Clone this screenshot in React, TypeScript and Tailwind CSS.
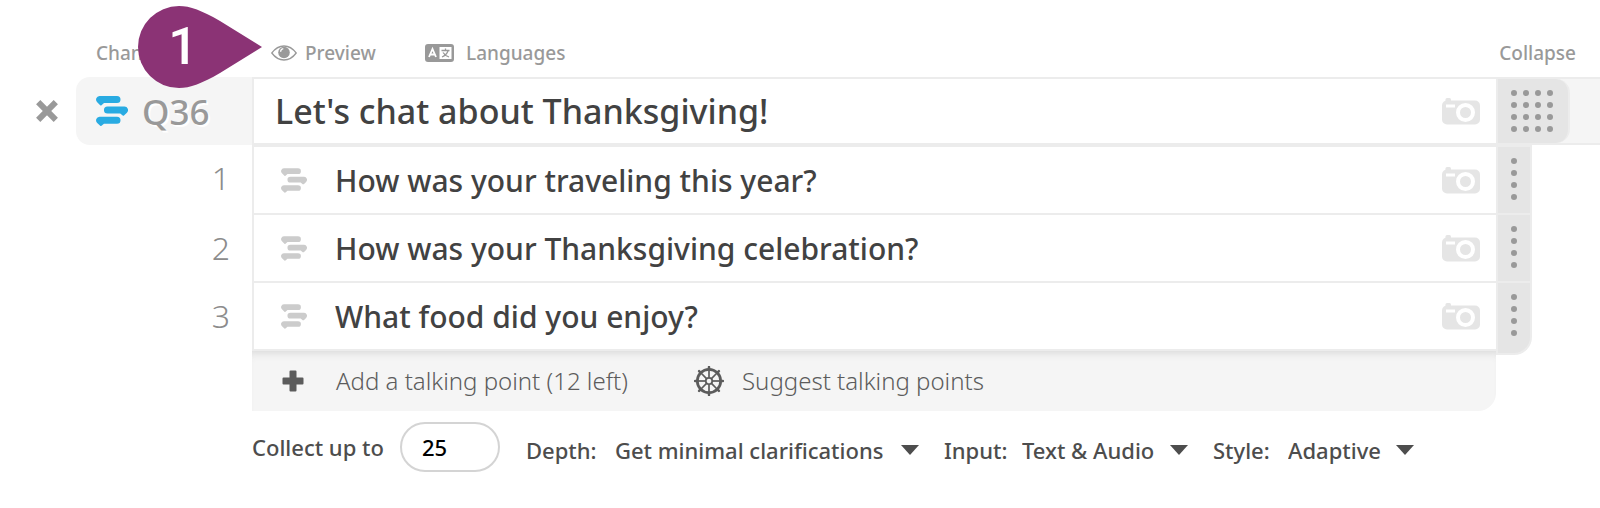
import React from 'react';

const talkingPoints = [
    'How was your traveling this year?',
    'How was your Thanksgiving celebration?',
    'What food did you enjoy?',
];

const settings = [
    { id: 'depth', label: 'Depth:', value: 'Get minimal clarifications', labelWidth: 'w-[75px]', width: 'w-[304px]' },
    { id: 'input', label: 'Input:', value: 'Text & Audio', labelWidth: 'w-16', width: 'w-[166px]' },
    { id: 'style', label: 'Style:', value: 'Adaptive', labelWidth: 'w-[61px]', width: 'w-[126px]' },
];

const spokes = [0, 45, 90, 135, 180, 225, 270, 315];

const ChatIcon: React.FC<{ className: string }> = ({ className }) => (
    <svg viewBox="0 0 32 30" className={className} fill="currentColor" aria-hidden="true">
        <path d="M3.500 0H21a3.500 3.500 0 0 1 0 7H8L5.500 9.300Q4.800 9.800 4.200 9.200L1.200 6.200A3.600 3.600 0 0 1 3.500 0Z" />
        <path d="M11.500 10.500H28.500a3.600 3.600 0 0 1 2.400 6.200L28 19.500Q27.400 20 26.700 19.500L24.200 17.600H11.500a3.500 3.500 0 0 1 0-7.100Z" />
        <path d="M3.500 20.700H21a3.500 3.500 0 0 1 0 7H8L5.500 29.800Q4.800 30.200 4.200 29.700L1.200 26.900A3.600 3.600 0 0 1 3.500 20.700Z" />
    </svg>
);

const CameraIcon = () => (
    <svg viewBox="0 0 38 28" className="h-7 w-[38px]" aria-hidden="true">
        <path fill="#e5e5e5" d="M3.500 2.500A1.500 1.500 0 0 1 5 1H7.500A1.500 1.500 0 0 1 9 2.500V5H3.500Z" />
        <rect y="3.500" width="38" height="24" rx="5" fill="#e5e5e5" />
        <rect x="4" y="7.500" width="9" height="3" fill="#fff" />
        <circle cx="23.500" cy="15.500" r="7.500" fill="none" stroke="#fff" strokeWidth="4" />
    </svg>
);

const EyeIcon = () => (
    <svg viewBox="0 0 26 16" className="h-4 w-[26px]" aria-hidden="true">
        <path d="M.8 8Q6 1 13 1T25.200 8Q20 15 13 15T.8 8Z" fill="none" stroke="currentColor" strokeWidth="1.300" />
        <circle cx="13" cy="7.500" r="5.800" fill="currentColor" />
        <path d="M9.600 6.800A3.300 3.300 0 0 1 12.300 3.600" fill="none" stroke="#fff" strokeWidth="1.300" />
    </svg>
);

const LanguageIcon = () => (
    <svg viewBox="0 0 29 18" className="h-[18px] w-[29px]" fill="none" aria-hidden="true">
        <rect width="29" height="18" rx="3" fill="currentColor" />
        <rect x="14.500" y="3" width="12" height="12" fill="#fff" />
        <path d="M4 13 7.500 5 11 13M5.300 10.500h4.400" stroke="#fff" strokeWidth="1.800" />
        <path d="M16.500 6.500h8M20.500 4.500v2M23 7q-1.500 4-6 6M18 8.500q2 3 6 4.500" stroke="currentColor" strokeWidth="1.300" />
    </svg>
);

const WheelIcon = () => (
    <svg viewBox="-15 -15 30 30" className="size-[30px]" fill="none" stroke="currentColor" aria-hidden="true">
        <circle r="11.700" strokeWidth="2.700" />
        <circle r="3.200" strokeWidth="1.800" />
        {spokes.map((angle) => (
            <g key={angle} transform={`rotate(${angle})`}>
                <path d="M0-3.500V-12" strokeWidth="1.700" />
                <path d="M0-12v-2" strokeWidth="2.500" strokeLinecap="round" />
            </g>
        ))}
    </svg>
);

const PlusIcon = () => (
    <svg viewBox="0 0 22 22" className="size-[22px]" fill="currentColor" aria-hidden="true">
        <path d="M8.500 .5h5a1 1 0 0 1 1 1v6h6a1 1 0 0 1 1 1v5a1 1 0 0 1-1 1h-6v6a1 1 0 0 1-1 1h-5a1 1 0 0 1-1-1v-6h-6a1 1 0 0 1-1-1v-5a1 1 0 0 1 1-1h6v-6a1 1 0 0 1 1-1Z" />
    </svg>
);

const CloseIcon = () => (
    <svg viewBox="0 0 22 22" className="size-[22px]" fill="none" stroke="currentColor" strokeWidth="6" aria-hidden="true">
        <path d="m2.200 2.200 17.600 17.600M19.800 2.200 2.200 19.800" />
    </svg>
);

const Dots: React.FC<{ columns: number }> = ({ columns }) => (
    <span className="flex gap-1.5">
        {Array.from({ length: columns }, (_, col) => (
            <span key={col} className="flex flex-col gap-1.5">
                {[0, 1, 2, 3].map((dot) => (
                    <span key={dot} className="size-1.5 rounded-full bg-[#999]" />
                ))}
            </span>
        ))}
    </span>
);

const StepPin = () => (
    <div className="pointer-events-none absolute top-1.5 left-[138px] z-10">
        <svg viewBox="0 0 124 82" className="h-[82px] w-[124px]" aria-hidden="true">
            <path fill="#8b3375" d="M124 41 82 15C64 4.500 52 0 41 0a41 41 0 0 0 0 82C52 82 64 77.500 82 67Z" />
        </svg>
        <span className="absolute inset-y-0 left-0 flex w-[90px] items-center justify-center font-[Roboto,sans-serif] text-[52px] leading-none font-medium text-white">
            1
        </span>
    </div>
);

const App: React.FC = () => {
    return (
        <main className="relative w-full bg-white font-['Noto_Sans',sans-serif] text-[#424242]">
            <StepPin />

            {/* Toolbar */}
            <div className="flex h-[77px] items-end pr-6 pl-24 pb-2.5 text-[19px] leading-7 font-medium text-[#999]">
                <button type="button" className="w-[175px] text-left">Change</button>
                <button type="button" className="flex w-[154px] items-center gap-2">
                    <EyeIcon />
                    Preview
                </button>
                <button type="button" className="flex items-center gap-3">
                    <LanguageIcon />
                    Languages
                </button>
                <button type="button" className="ml-auto">Collapse</button>
            </div>

            {/* Question */}
            <div className="flex h-[68px]">
                <button type="button" aria-label="Remove question" className="flex w-[76px] items-center justify-end pr-[18px] text-[#999]">
                    <CloseIcon />
                </button>
                <div className="flex w-44 items-center gap-3.5 rounded-l-[14px] bg-[#f5f5f5] pl-5">
                    <ChatIcon className="h-[30px] w-8 text-[#29abe2]" />
                    <span className="text-[35px] leading-none font-medium text-[#999] [text-shadow:2px_2px_0_#fff]">Q36</span>
                </div>
                <div className="flex flex-1 items-center border-y-2 border-l-2 border-[#ececec] pr-4 pl-[21px]">
                    <input
                        aria-label="Question"
                        defaultValue="Let's chat about Thanksgiving!"
                        className="h-full min-w-0 flex-1 text-[34px] font-medium outline-none"
                    />
                    <button type="button" aria-label="Add question image">
                        <CameraIcon />
                    </button>
                </div>
                <div className="w-[104px] border-y-2 border-[#ececec] bg-[#f5f5f5]">
                    <button type="button" aria-label="Move question" className="flex h-full w-[74px] rounded-r-[14px] border-x-2 border-[#ececec] bg-[#e5e5e5] pt-[11px] pl-[13px]">
                        <Dots columns={4} />
                    </button>
                </div>
            </div>

            {/* Talking points */}
            <ol>
                {talkingPoints.map((point, index) => (
                    <li key={point} className="group flex">
                        <span className="flex h-[66px] w-[252px] items-center justify-end pr-[22px] text-[32px] font-light text-[#8c8c8c]">
                            {index + 1}
                        </span>
                        <div className="flex flex-1 items-center border-b-2 border-l-2 border-[#ececec] pr-4 pl-[27px] group-first:border-t-2">
                            <ChatIcon className="h-[25px] w-[26px] text-[#ccc]" />
                            <input
                                aria-label={`Talking point ${index + 1}`}
                                defaultValue={point}
                                className="ml-7 h-[66px] min-w-0 flex-1 text-[30px] font-medium outline-none"
                            />
                            <button type="button" aria-label={`Add image to talking point ${index + 1}`}>
                                <CameraIcon />
                            </button>
                        </div>
                        <button
                            type="button"
                            aria-label={`Move talking point ${index + 1}`}
                            className="mr-[68px] flex w-9 border-x-2 border-b-2 border-[#ececec] bg-[#e5e5e5] pt-[11px] pl-[13px] group-first:border-t-2 group-last:-mb-1 group-last:rounded-br-[18px]"
                        >
                            <Dots columns={1} />
                        </button>
                    </li>
                ))}
            </ol>

            {/* Actions */}
            <div className="mr-[104px] ml-[252px] flex h-[60px] items-center rounded-br-[18px] bg-[#f5f5f5] pl-[30px] text-[24px] font-light text-[#5c5c5c] shadow-[inset_0_8px_8px_-6px_#d8d8d8]">
                <button type="button" className="flex w-[412px] items-center gap-8">
                    <PlusIcon />
                    Add a talking point (12 left)
                </button>
                <button type="button" className="flex items-center gap-[18px]">
                    <WheelIcon />
                    Suggest talking points
                </button>
            </div>

            {/* Settings */}
            <form className="flex items-center pt-[11px] pl-[252px] text-[22px] font-medium text-[#4d4d4d]">
                <label htmlFor="limit" className="w-[148px]">Collect up to</label>
                <input id="limit" defaultValue="25" className="mr-[26px] h-[50px] w-[100px] rounded-full border-2 border-[#d4d4d4] px-5 text-black outline-none" />
                <div className="flex gap-[25px] pt-1.5">
                    {settings.map((setting) => (
                        <div key={setting.id} className="flex items-center gap-3.5">
                            <label htmlFor={setting.id} className={setting.labelWidth}>{setting.label}</label>
                            <span className="relative flex items-center">
                                <select id={setting.id} className={`appearance-none outline-none ${setting.width}`}>
                                    <option>{setting.value}</option>
                                </select>
                                <svg viewBox="0 0 18 10" className="pointer-events-none absolute right-0 h-2.5 w-[18px]" fill="currentColor" aria-hidden="true">
                                    <path d="M0 0h18L9 10Z" />
                                </svg>
                            </span>
                        </div>
                    ))}
                </div>
            </form>
        </main>
    );
};

export default App;
